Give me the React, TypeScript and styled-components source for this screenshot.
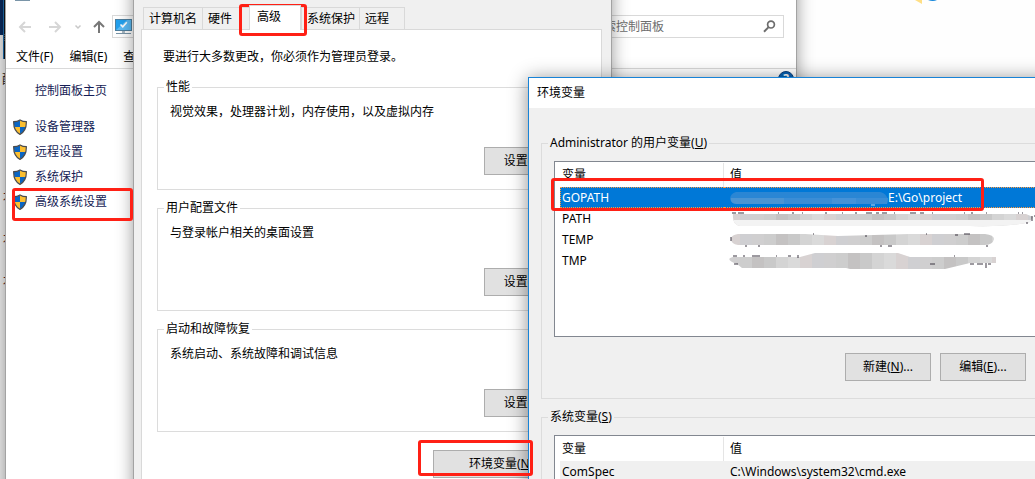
import React from "react";
import styled, { createGlobalStyle, css } from "styled-components";

const GlobalStyle = createGlobalStyle`
  * { box-sizing: border-box; }
  body {
    margin: 0;
    overflow: hidden;
    background: #fefefe;
    color: #000;
    font: 12px/16px "Noto Sans", "Noto Sans CJK SC", sans-serif;
  }
  button, input { font: inherit; color: inherit; }
  fieldset { margin: 0; padding: 0; min-width: 0; }
`;

const Desktop = styled.main`
  position: relative;
  height: 100vh;
  min-height: 479px;
  overflow: hidden;
`;

const BackStrip = styled.div`
  position: absolute;
  left: 0;
  top: 0;
  bottom: 0;
  width: 20px;
  white-space: nowrap;
  background: #f0f0f0;
`;

const StripArt = styled.svg`
  display: block;
`;

const StripLabel = styled.div<{ $gap: number; $color: string; $indent: number }>`
  margin-top: ${(p) => p.$gap}px;
  padding-left: ${(p) => p.$indent}px;
  color: ${(p) => p.$color};
`;

const CornerArt = styled.svg`
  position: absolute;
  left: 914px;
  top: 0;
`;

const Window = styled.section`
  position: absolute;
  display: flex;
  flex-direction: column;
  border: 1px solid #a3a3a3;
`;

const ControlPanel = styled(Window)`
  left: 5px;
  top: -31px;
  bottom: -60px;
  width: 792px;
  background: #fff;
  box-shadow: 0 2px 16px rgba(0, 0, 0, 0.4);
`;

const PanelTitle = styled.header`
  display: flex;
  align-items: flex-end;
  height: 32px;
  padding-left: 8px;
`;

const Toolbar = styled.div`
  display: flex;
  align-items: center;
  height: 47px;
  padding: 2px 12px 0;
`;

const NavButton = styled.button<{ $before: number }>`
  display: flex;
  justify-content: center;
  align-items: center;
  flex: none;
  width: 14px;
  height: 22px;
  margin-left: ${(p) => p.$before}px;
  padding: 0;
  border: 0;
  background: none;
`;

const fieldBox = css`
  display: flex;
  align-items: center;
  height: 23px;
  border: 1px solid #d9d9d9;
  background: #fff;
`;

const Address = styled.div`
  ${fieldBox}
  flex: 1;
  margin: 0 7px 0 6px;
  padding-left: 2px;
`;

const Search = styled.label`
  ${fieldBox}
  width: 200px;
  padding: 0 7px;
  input {
    flex: 1;
    min-width: 0;
    padding: 0;
    border: 0;
    outline: 0;
    background: none;
    &::placeholder { color: #6d6d6d; opacity: 1; }
  }
`;

const MenuBar = styled.nav`
  display: flex;
  align-items: flex-start;
  gap: 16px;
  height: 20px;
  padding-left: 10px;
  border-bottom: 1px solid #d9d9d9;
`;

const MenuItem = styled.button`
  padding: 0;
  border: 0;
  background: none;
`;

const PanelBody = styled.div`
  display: flex;
  justify-content: space-between;
`;

const Sidebar = styled.nav`
  display: flex;
  flex-direction: column;
  gap: 9px;
  padding: 14px 0 0 6px;
  a {
    display: flex;
    align-items: center;
    gap: 7px;
    color: #151c55;
    text-decoration: none;
    height: 16px;
  }
  a:first-child { padding-left: 23px; margin-bottom: 11px; }
`;

const HelpButton = styled.button`
  width: 16px;
  height: 16px;
  margin: 2px 2px 0 0;
  padding: 0;
  border: 1px solid #0a3f7c;
  border-radius: 8px;
  background: #0863b5;
  color: #fff;
  font-weight: 700;
  line-height: 14px;
`;

const Properties = styled(Window)`
  left: 133px;
  top: -31px;
  bottom: -60px;
  width: 479px;
  padding: 35px 9px 8px 7px;
  background: #f0f0f0;
  box-shadow: 0 2px 16px rgba(0, 0, 0, 0.4);
`;

const Tabs = styled.div`
  display: flex;
  align-items: flex-end;
  padding-left: 2px;
  height: 24px;
`;

const Tab = styled.button<{ $width: number; $active?: boolean }>`
  width: ${(p) => p.$width}px;
  height: ${(p) => (p.$active ? 25 : 22)}px;
  padding: ${(p) => (p.$active ? "0 0 2px 7px" : "0 0 0 5px")};
  border: 1px solid #d9d9d9;
  border-bottom: 0;
  border-right-width: ${(p) => (p.$active ? 1 : 0)}px;
  background: ${(p) => (p.$active ? "#fff" : "#f0f0f0")};
  margin-bottom: ${(p) => (p.$active ? -1 : 0)}px;
  z-index: ${(p) => (p.$active ? 1 : 0)};
  text-align: left;
  white-space: nowrap;
  &:last-child { border-right-width: 1px; }
  & + & { border-left-width: ${(p) => (p.$width === 58 ? 0 : 1)}px; }
`;

const TabPanel = styled.div`
  flex: 1;
  display: flex;
  flex-direction: column;
  gap: 10px;
  padding: 19px 15px 0;
  border: 1px solid #d9d9d9;
  background: #fff;
`;

const Intro = styled.p`
  margin: 0 0 4px;
  padding-left: 6px;
`;

const Group = styled.fieldset`
  display: block;
  border: 1px solid #dcdcdc;
`;

const SettingGroup = styled(Group)`
  height: 111px;
  legend {
    height: 16px;
    margin-left: 6px;
    padding: 0 2px;
  }
  p { margin: 9px 0 27px 12px; }
`;

const ButtonRow = styled.div<{ $inset: number }>`
  display: flex;
  justify-content: flex-end;
  gap: 9px;
  padding-right: ${(p) => p.$inset}px;
`;

const DialogLinks = styled(ButtonRow)`
  margin-top: 8px;
`;

const PushButton = styled.button<{ $width: number }>`
  width: ${(p) => p.$width}px;
  height: 28px;
  padding: 0;
  border: 1px solid #adadad;
  background: #e1e1e1;
  white-space: nowrap;
`;

const EnvDialog = styled(Window)`
  left: 528px;
  top: 77px;
  width: 619px;
  border-color: #1883d7;
  background: #f0f0f0;
  box-shadow: 0 2px 18px rgba(0, 0, 0, 0.45);
`;

const EnvTitle = styled.header`
  height: 30px;
  padding: 7px 8px;
  background: #fff;
`;

const EnvBody = styled.div`
  display: flex;
  flex-direction: column;
  gap: 10px;
  padding: 27px 12px 12px;
`;

const VariableGroup = styled(Group)`
  padding: 10px 12px 17px;
  legend {
    height: 16px;
    margin-left: -6px;
    padding: 0 2px;
  }
`;

const ListBox = styled.div<{ $height: number }>`
  height: ${(p) => p.$height}px;
  margin-bottom: 16px;
  padding: 1px 0 0 5px;
  border: 1px solid #828790;
  background: #fff;
  overflow: hidden;
`;

const VariableTable = styled.table`
  width: 100%;
  table-layout: fixed;
  border-collapse: separate;
  border-spacing: 0;
  text-align: left;
  th { height: 24px; padding: 0 0 0 2px; font-weight: 400; }
  th:first-child { width: 164px; border-right: 1px solid #e5e5e5; }
  th + th { padding-left: 6px; }
  td { height: 21px; padding: 0 0 0 2px; white-space: nowrap; }
  td + td { padding-left: 6px; }
`;

const VariableRow = styled.tr<{ $state?: "selected" | "shaded" }>`
  ${(p) =>
    p.$state === "selected" &&
    css`
      td {
        background: #0078d7;
        color: #fff;
        border: 1px dotted #ff9a40;
        border-width: 1px 0;
      }
      td:first-child { border-left-width: 1px; padding-left: 1px; }
    `}
  ${(p) => p.$state === "shaded" && css`td { background: #f0f0f0; }`}
`;

const Value = styled.div`
  display: flex;
  align-items: center;
  height: 19px;
  svg { flex: none; overflow: visible; }
`;

const Highlight = styled.div<{ $x: number; $y: number; $w: number; $h: number }>`
  position: absolute;
  left: ${(p) => p.$x}px;
  top: ${(p) => p.$y}px;
  width: ${(p) => p.$w}px;
  height: ${(p) => p.$h}px;
  border: 3px solid #ff2015;
  border-radius: 3px;
  pointer-events: none;
`;

const Arrow = ({ d, color, width = 2 }: { d: string; color: string; width?: number }) => (
  <svg width="14" height="14" viewBox="0 0 14 14" fill="none" stroke={color} strokeWidth={width}>
    <path d={d} />
  </svg>
);

const Shield = () => (
  <svg width="16" height="16" viewBox="0 0 16 16">
    <defs>
      <clipPath id="shield">
        <path d="M8 1.3 C10 2.5 12 3 14 3 C14.2 9 12.5 12.5 8 15 C3.5 12.5 1.8 9 2 3 C4 3 6 2.5 8 1.3Z" />
      </clipPath>
    </defs>
    <g clipPath="url(#shield)">
      <path fill="#0b66c3" d="M0 0h8v8H0zM8 8h8v8H8z" />
      <path fill="#fcbf30" d="M8 0h8v8H8zM0 8h8v8H0z" />
    </g>
    <path
      d="M8 .9 C10 2.2 12 2.7 14.3 2.7 C14.6 9.2 12.8 12.8 8 15.4 C3.2 12.8 1.4 9.2 1.7 2.7 C4 2.7 6 2.2 8 .9Z"
      fill="none"
      stroke="#4b4b4b"
      strokeWidth="1.2"
    />
  </svg>
);

const Monitor = () => (
  <svg width="17" height="16" viewBox="0 0 17 16">
    <rect x=".5" y=".5" width="16" height="11" fill="#22a0ee" stroke="#4f7f9e" />
    <path d="M1 11L12 1h4v10z" fill="#5bbcf6" />
    <path d="M5.5 5.5l2.3 2.3 4-4.6" fill="none" stroke="#fff" strokeWidth="1.6" />
    <path d="M7 12h3v2H7z" fill="#a9b8c2" />
    <path d="M1 14.5h15" stroke="#7a95a8" />
  </svg>
);

const Magnifier = () => (
  <svg width="13" height="13" viewBox="0 0 13 13" fill="none" stroke="#6d6d6d">
    <circle cx="8" cy="4.6" r="3.4" strokeWidth="1.7" />
    <path d="M5.6 7.1L1 11.7" strokeWidth="2" />
  </svg>
);

const grays = ["#d4d4d4", "#cdcdcd", "#d8d2d2", "#c9c9c9", "#d0cfd0", "#dadada", "#c4c2c2", "#cfcfd2"];

const Smear = ({ id, width, outline, ticks }: { id: string; width: number; outline: string; ticks: string }) => (
  <svg width={width} height="19" viewBox={`0 0 ${width} 19`} aria-hidden="true">
    <clipPath id={id}>
      <path d={outline} />
    </clipPath>
    <g clipPath={`url(#${id})`}>
      {Array.from({ length: Math.ceil(width / 12) }, (_, i) => (
        <rect key={i} x={i * 12 - 2} y="0" width="12" height="20" fill={grays[(i * 5 + width) % grays.length]} />
      ))}
      {id === "path" && <rect y="11" width={width} height="9" fill="#f3f3f3" />}
    </g>
    <path d={ticks} stroke="#3b3540" strokeWidth="1" fill="none" />
  </svg>
);

const BlueSmear = () => (
  <svg width="158" height="19" viewBox="0 0 158 19" aria-hidden="true">
    <path d="M6 4H150C155 5 158 9 158 13L157 16H8C-2 16-2 6 6 4Z" fill="#2a86d4" />
    <path d="M1 10H54V16H8C3 16 0 14 1 10Z" fill="#4b94d3" />
    <path d="M54 10h48v6H54zM126 10h32l-1 6h-31z" fill="#3a8dd6" />
    <path d="M102 10h24v6h-24z" fill="#4592d8" />
    <path d="M141 17h4" stroke="#b6d6f2" />
  </svg>
);

const settings = [
  { title: "性能", text: "视觉效果，处理器计划，内存使用，以及虚拟内存", key: "S" },
  { title: "用户配置文件", text: "与登录帐户相关的桌面设置", key: "E" },
  { title: "启动和故障恢复", text: "系统启动、系统故障和调试信息", key: "T" },
];

const Columns = () => (
  <thead>
    <tr>
      <th scope="col">变量</th>
      <th scope="col">值</th>
    </tr>
  </thead>
);

const EditButtons = () => (
  <ButtonRow $inset={0}>
    <PushButton $width={86}>新建(<u>N</u>)...</PushButton>
    <PushButton $width={86}>编辑(<u>E</u>)...</PushButton>
    <PushButton $width={86}>删除(<u>D</u>)</PushButton>
  </ButtonRow>
);

export default function App() {
  return (
    <Desktop>
      <GlobalStyle />
      <BackStrip>
        <StripArt width="6" height="59" viewBox="0 0 6 59">
          <rect width="6" height="59" fill="#111418" />
          <rect width="3" height="35" fill="#0b2a5c" />
          <rect y="35" width="3" height="24" fill="#e8e8e8" />
          <rect x="3" width="1" height="59" fill="#1c6fb0" />
          <path d="M5 34v7" stroke="#9a9a9a" strokeDasharray="1 1" />
        </StripArt>
        <StripLabel $gap={13} $indent={2} $color="#222">配</StripLabel>
        <StripLabel $gap={101} $indent={3} $color="#5a2626">木</StripLabel>
        <StripLabel $gap={26} $indent={3} $color="#5a2626">木</StripLabel>
        <StripLabel $gap={26} $indent={3} $color="#5a2626">木</StripLabel>
      </BackStrip>
      <CornerArt width="24" height="5" viewBox="0 0 24 5">
        <path d="M1 0h7v4z" fill="#ffdf85" />
        <path d="M14 0h9q-4 2-9 0z" fill="#1688dc" />
      </CornerArt>

      <ControlPanel aria-label="控制面板">
        <PanelTitle>
          <Monitor />
        </PanelTitle>
        <Toolbar>
          <NavButton $before={0} aria-label="后退">
            <Arrow d="M13 7H2M7 2L2 7l5 5" color="#d6d6d6" />
          </NavButton>
          <NavButton $before={16} aria-label="前进">
            <Arrow d="M1 7h11M7 2l5 5-5 5" color="#d6d6d6" />
          </NavButton>
          <NavButton $before={9} aria-label="最近的位置">
            <Arrow d="M4.5 5.5L7 8l2.5-2.5" color="#c8c8c8" width={1.5} />
          </NavButton>
          <NavButton $before={7} aria-label="上移">
            <Arrow d="M7 13V2M2 7l5-5 5 5" color="#777" />
          </NavButton>
          <Address>
            <Monitor />
          </Address>
          <Search>
            <input type="text" placeholder="搜索控制面板" aria-label="搜索控制面板" />
            <Magnifier />
          </Search>
        </Toolbar>
        <MenuBar>
          <MenuItem>文件(F)</MenuItem>
          <MenuItem>编辑(E)</MenuItem>
          <MenuItem>查看(V)</MenuItem>
        </MenuBar>
        <PanelBody>
          <Sidebar>
            <a href="#home">控制面板主页</a>
            <a href="#devices"><Shield />设备管理器</a>
            <a href="#remote"><Shield />远程设置</a>
            <a href="#protection"><Shield />系统保护</a>
            <a href="#advanced"><Shield />高级系统设置</a>
          </Sidebar>
          <HelpButton aria-label="帮助">?</HelpButton>
        </PanelBody>
      </ControlPanel>

      <Properties aria-label="系统属性">
        <Tabs role="tablist">
          <Tab role="tab" $width={59}>计算机名</Tab>
          <Tab role="tab" $width={47}>硬件</Tab>
          <Tab role="tab" $width={52} $active aria-selected>高级</Tab>
          <Tab role="tab" $width={58}>系统保护</Tab>
          <Tab role="tab" $width={46}>远程</Tab>
        </Tabs>
        <TabPanel>
          <Intro>要进行大多数更改，你必须作为管理员登录。</Intro>
          {settings.map((s) => (
            <SettingGroup key={s.title}>
              <legend>{s.title}</legend>
              <p>{s.text}</p>
              <ButtonRow $inset={14}>
                <PushButton $width={87}>设置(<u>{s.key}</u>)...</PushButton>
              </ButtonRow>
            </SettingGroup>
          ))}
          <DialogLinks $inset={7}>
            <PushButton $width={146}>环境变量(<u>N</u>)...</PushButton>
          </DialogLinks>
        </TabPanel>
      </Properties>

      <EnvDialog role="dialog" aria-label="环境变量">
        <EnvTitle>环境变量</EnvTitle>
        <EnvBody>
          <VariableGroup>
            <legend>Administrator 的用户变量(<u>U</u>)</legend>
            <ListBox $height={176}>
              <VariableTable>
                <Columns />
                <tbody>
                  <VariableRow $state="selected">
                    <td>GOPATH</td>
                    <td><Value><BlueSmear />E:\Go\project</Value></td>
                  </VariableRow>
                  <VariableRow>
                    <td>PATH</td>
                    <td>
                      <Value>
                        <Smear
                          id="path"
                          width={306}
                          outline="M4 5H296L303 8 300 13Q280 18 240 17H10Q2 16 3 5Z"
                          ticks="M2 4h4M8 4h6M48 4h1M62 4h2M72 4h1M95 4h2M112 4h1M125 4h2M136 4h6M146 4h3M152 4h5M164 4h1M180 4h6M190 4h4M202 4h1M234 4h1M241 4h2M256 4h1M288 4h1M292 4h1M296 14h2M302 7v5M304 7h2"
                        />
                      </Value>
                    </td>
                  </VariableRow>
                  <VariableRow>
                    <td>TEMP</td>
                    <td>
                      <Value>
                        <Smear
                          id="temp"
                          width={266}
                          outline="M8 4H75L108 6 180 4H255Q264 5 264 9 263 15 254 15H8Q1 14 1 9 1 5 8 4Z"
                          ticks="M1 7v4M15 16h2M28 16h2M83 4h1M136 5v2M150 16h2M158 16h4M196 4h1M225 5h3M234 4h6M256 16h2"
                        />
                      </Value>
                    </td>
                  </VariableRow>
                  <VariableRow>
                    <td>TMP</td>
                    <td>
                      <Value>
                        <Smear
                          id="tmp"
                          width={268}
                          outline="M3 6H70L85 2H168L180 6H266V12H240L215 18H120L116 17H12L7 13Q-6 8 3 6Z"
                          ticks="M3 5h4M13 5h2M22 5h8M46 5h1M58 5h3M68 4v3M4 13h4M200 13h5M240 13h4M247 13h6M256 12v5M258 13h3M224 5h1"
                        />
                      </Value>
                    </td>
                  </VariableRow>
                </tbody>
              </VariableTable>
            </ListBox>
            <EditButtons />
          </VariableGroup>
          <VariableGroup>
            <legend>系统变量(<u>S</u>)</legend>
            <ListBox $height={176}>
              <VariableTable>
                <Columns />
                <tbody>
                  <VariableRow $state="shaded">
                    <td>ComSpec</td>
                    <td>C:\Windows\system32\cmd.exe</td>
                  </VariableRow>
                </tbody>
              </VariableTable>
            </ListBox>
            <EditButtons />
          </VariableGroup>
        </EnvBody>
      </EnvDialog>

      <Highlight $x={239} $y={4} $w={68} $h={32} />
      <Highlight $x={12} $y={188} $w={121} $h={33} />
      <Highlight $x={551} $y={178} $w={433} $h={33} />
      <Highlight $x={418} $y={440} $w={115} $h={36} />
    </Desktop>
  );
}
